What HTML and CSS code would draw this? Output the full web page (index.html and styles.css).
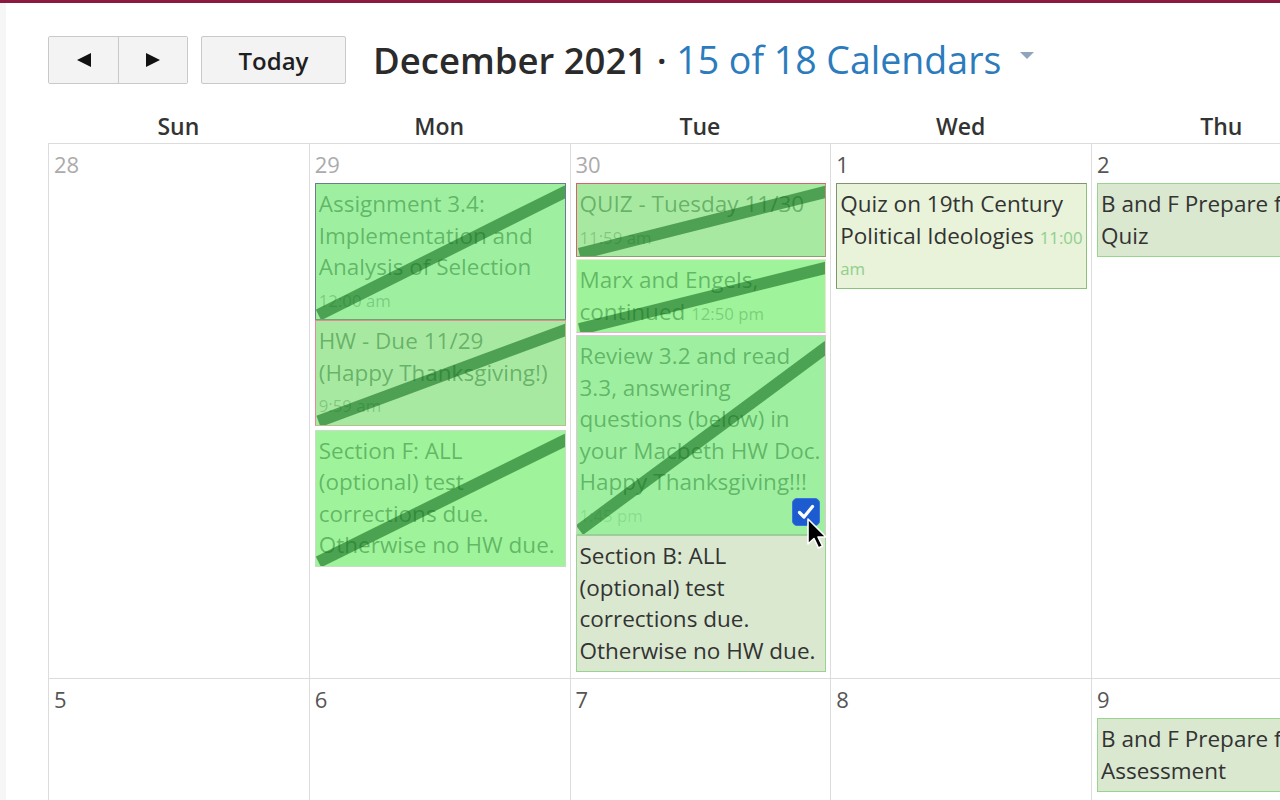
FILE: index.html
```html
<!DOCTYPE html>
<html lang="en">
<head>
<meta charset="utf-8">
<title>Calendar</title>
<link rel="stylesheet" href="styles.css">
</head>
<body>
<div class="topbar"></div>
<div class="layout">
  <div class="sidebar"></div>
  <main class="main">
    <div class="toolbar">
      <div class="btn-group">
        <button class="btn nav-btn" aria-label="Previous"><svg width="16" height="16" viewBox="0 0 16 16"><polygon points="1,8 15,1 15,15" fill="#111"/></svg></button>
        <button class="btn nav-btn" aria-label="Next"><svg width="16" height="16" viewBox="0 0 16 16"><polygon points="15,8 1,1 1,15" fill="#111"/></svg></button>
      </div>
      <button class="btn today-btn">Today</button>
      <h1 class="title">December 2021 <span class="dot">·</span> <span class="cals">15 of 18 Calendars</span><span class="caret"></span></h1>
    </div>

    <div class="weekdays">
      <div>Sun</div><div>Mon</div><div>Tue</div><div>Wed</div><div>Thu</div><div>Fri</div><div>Sat</div>
    </div>

    <div class="month">
      <div class="week">
        <div class="day other"><div class="num">28</div></div>
        <div class="day other"><div class="num">29</div>
          <div class="ev done b-slate g1 flush"><svg class="strike" viewBox="0 0 100 100" preserveAspectRatio="none"><line x1="1" y1="97" x2="101" y2="5" vector-effect="non-scaling-stroke"/></svg><span class="t">Assignment 3.4: Implementation and Analysis of Selection</span> <span class="tm">12:00 am</span></div>
          <div class="ev done b-pink g2 gap4"><svg class="strike" viewBox="0 0 100 100" preserveAspectRatio="none"><line x1="1" y1="97" x2="101" y2="8" vector-effect="non-scaling-stroke"/></svg><span class="t">HW - Due 11/29 (Happy Thanksgiving!)</span> <span class="tm">9:59 am</span></div>
          <div class="ev done b-light g3"><svg class="strike" viewBox="0 0 100 100" preserveAspectRatio="none"><line x1="1" y1="97" x2="101" y2="6" vector-effect="non-scaling-stroke"/></svg><span class="t">Section F: ALL (optional) test corrections due. Otherwise no HW due.</span></div>
        </div>
        <div class="day other"><div class="num">30</div>
          <div class="ev done b-red g2"><svg class="strike" viewBox="0 0 100 100" preserveAspectRatio="none"><line x1="1" y1="97" x2="101" y2="10" vector-effect="non-scaling-stroke"/></svg><span class="t">QUIZ - Tuesday 11/30</span> <span class="tm">11:59 am</span></div>
          <div class="ev done b-cream g3"><svg class="strike" viewBox="0 0 100 100" preserveAspectRatio="none"><line x1="1" y1="96" x2="101" y2="10" vector-effect="non-scaling-stroke"/></svg><span class="t">Marx and Engels, continued</span> <span class="tm">12:50 pm</span></div>
          <div class="ev done b-lilac g1 flush"><svg class="strike" viewBox="0 0 100 100" preserveAspectRatio="none"><line x1="1" y1="98" x2="101" y2="5" vector-effect="non-scaling-stroke"/></svg><span class="t">Review 3.2 and read 3.3, answering questions (below) in your Macbeth HW Doc. Happy Thanksgiving!!!</span> <span class="tm faint">1:45 pm</span>
            <span class="check"><svg width="20" height="20" viewBox="0 0 20 20"><path d="M3.5 10.5 L8 15 L16.5 4.5" fill="none" stroke="#fff" stroke-width="3.2" stroke-linecap="round" stroke-linejoin="round"/></svg></span>
          </div>
          <div class="ev pale b-green"><span class="t">Section B: ALL (optional) test corrections due. Otherwise no HW due.</span></div>
        </div>
        <div class="day"><div class="num">1</div>
          <div class="ev pale2 b-olive"><span class="t">Quiz on 19th Century Political Ideologies</span> <span class="tm">11:00 am</span></div>
        </div>
        <div class="day"><div class="num">2</div>
          <div class="ev pale b-green"><span class="t">B and F Prepare for Quiz</span></div>
        </div>
        <div class="day"><div class="num">3</div></div>
        <div class="day"><div class="num">4</div></div>
      </div>
      <div class="week">
        <div class="day"><div class="num">5</div></div>
        <div class="day"><div class="num">6</div></div>
        <div class="day"><div class="num">7</div></div>
        <div class="day"><div class="num">8</div></div>
        <div class="day"><div class="num">9</div>
          <div class="ev pale b-green"><span class="t">B and F Prepare for Assessment</span></div>
        </div>
        <div class="day"><div class="num">10</div></div>
        <div class="day"><div class="num">11</div></div>
      </div>
    </div>
  </main>
</div>
<svg class="cursor" width="24" height="34" viewBox="0 0 24 34"><path d="M2 2 L2 27 L8 21.5 L12.5 31 L16.5 29 L12 20 L20 20 Z" fill="#000" stroke="#fff" stroke-width="1.6" stroke-linejoin="round"/></svg>
</body>
</html>
```

FILE: styles.css
```css
* { box-sizing: border-box; }
html, body { margin: 0; padding: 0; }
body {
  width: 1280px;
  height: 800px;
  overflow: hidden;
  background: #fff;
  font-family: "Open Sans", "DejaVu Sans", sans-serif;
  color: #2d3b45;
  position: relative;
}
.topbar { height: 3px; background: #8c1a40; }
.layout { display: flex; height: 797px; }
.sidebar { width: 6px; flex: none; background: #f6f6f6; }
.main { flex: 1; min-width: 0; overflow: hidden; padding: 33px 0 0 42px; }

.toolbar { display: flex; align-items: center; height: 48px; }
.btn-group { display: flex; height: 48px; border: 1px solid #c9c9c9; border-radius: 2px; background: #f3f3f3; }
.btn {
  font-family: inherit;
  background: #f3f3f3;
  border: none;
  margin: 0;
  padding: 0;
  color: #1f1f1f;
  display: flex;
  align-items: center;
  justify-content: center;
}
.nav-btn { width: 69px; height: 46px; }
.nav-btn + .nav-btn { border-left: 1px solid #c9c9c9; }
.today-btn {
  margin-left: 13px;
  width: 145px;
  height: 48px;
  border: 1px solid #c9c9c9;
  border-radius: 2px;
  font-size: 24px;
  font-weight: 600;
}
.title {
  margin: 0 0 0 27px;
  font-size: 36.5px;
  line-height: 48px;
  font-weight: 600;
  color: #2b2b2b;
  white-space: nowrap;
}
.title .cals { color: #2b7bbd; font-weight: 400; font-size: 37.5px; }
.caret {
  display: inline-block;
  vertical-align: top;
  margin: 16px 0 0 19px;
  width: 0; height: 0;
  border-left: 7px solid transparent;
  border-right: 7px solid transparent;
  border-top: 7px solid #8fa5bb;
}

.weekdays {
  display: grid;
  grid-template-columns: repeat(7, 260.75px);
  margin-top: 26px;
  height: 33px;
  line-height: 33px;
  font-size: 23px;
  font-weight: 600;
  color: #333;
  text-align: center;
}

.month { width: 1825px; border-top: 1px solid #dcdcdc; }
.week {
  display: grid;
  grid-template-columns: repeat(7, 260.75px);
  height: 535px;
  border-bottom: 1px solid #dcdcdc;
}
.day {
  border-left: 1px solid #dcdcdc;
  padding: 5px 4px 0 5px;
  display: flex;
  flex-direction: column;
}
.num {
  height: 30px;
  line-height: 30px;
  font-size: 22px;
  color: #555;
  margin-bottom: 4px;
}
.other .num { color: #ababab; }

.ev {
  position: relative;
  overflow: hidden;
  border: 1px solid #9c9;
  padding: 4px 3px 5px 3px;
  font-size: 22.5px;
  line-height: 31.5px;
  margin-bottom: 2px;
  color: #333;
}
.ev.flush { margin-bottom: 0; }
.ev.gap4 { margin-bottom: 4px; }
.ev .t, .ev .tm { position: relative; }
.ev .tm { font-size: 16.8px; line-height: 1; color: #8fcf8c; }

.done { color: rgba(20, 110, 30, 0.45); }
.done .tm { color: rgba(20, 110, 30, 0.28); }
.done .tm.faint { color: rgba(20, 110, 30, 0.16); }
.g1 { background: #9ef0a0; }
.g2 { background: #a8e9a2; }
.g3 { background: #9ff39b; }
.pale { background: #dae8d0; }
.pale2 { background: #e8f3d9; }

.b-slate { border-color: #6b7c8e; border-bottom-color: #76a070; }
.b-pink { border-color: #e48a96; border-bottom-color: #b8c08a; border-right-color: #b8c08a; }
.b-light { border-color: #c8ddc4; }
.b-red { border-color: #d9606e; border-bottom-color: #8aa070; border-right-color: #c09080; }
.b-cream { border-color: #ece6cc; border-bottom-color: #e0b8c8; }
.b-lilac { border-color: #e4c4d6; border-bottom-color: #9ccc98; }
.b-green { border-color: #98d490; }
.b-olive { border-color: #7f9572; border-right-color: #8cc07e; border-bottom-color: #8cc07e; }

.strike {
  position: absolute;
  left: 0; top: 0;
  width: 100%; height: 100%;
}
.strike line { stroke: rgba(35, 125, 45, 0.68); stroke-width: 12; }

.check {
  position: absolute;
  right: 5px;
  bottom: 8px;
  width: 28px;
  height: 28px;
  border-radius: 5px;
  background: #1c5bd0;
  border: 1px solid #3b74da;
  display: flex;
  align-items: center;
  justify-content: center;
}
.cursor { position: absolute; left: 806px; top: 517px; }
```
